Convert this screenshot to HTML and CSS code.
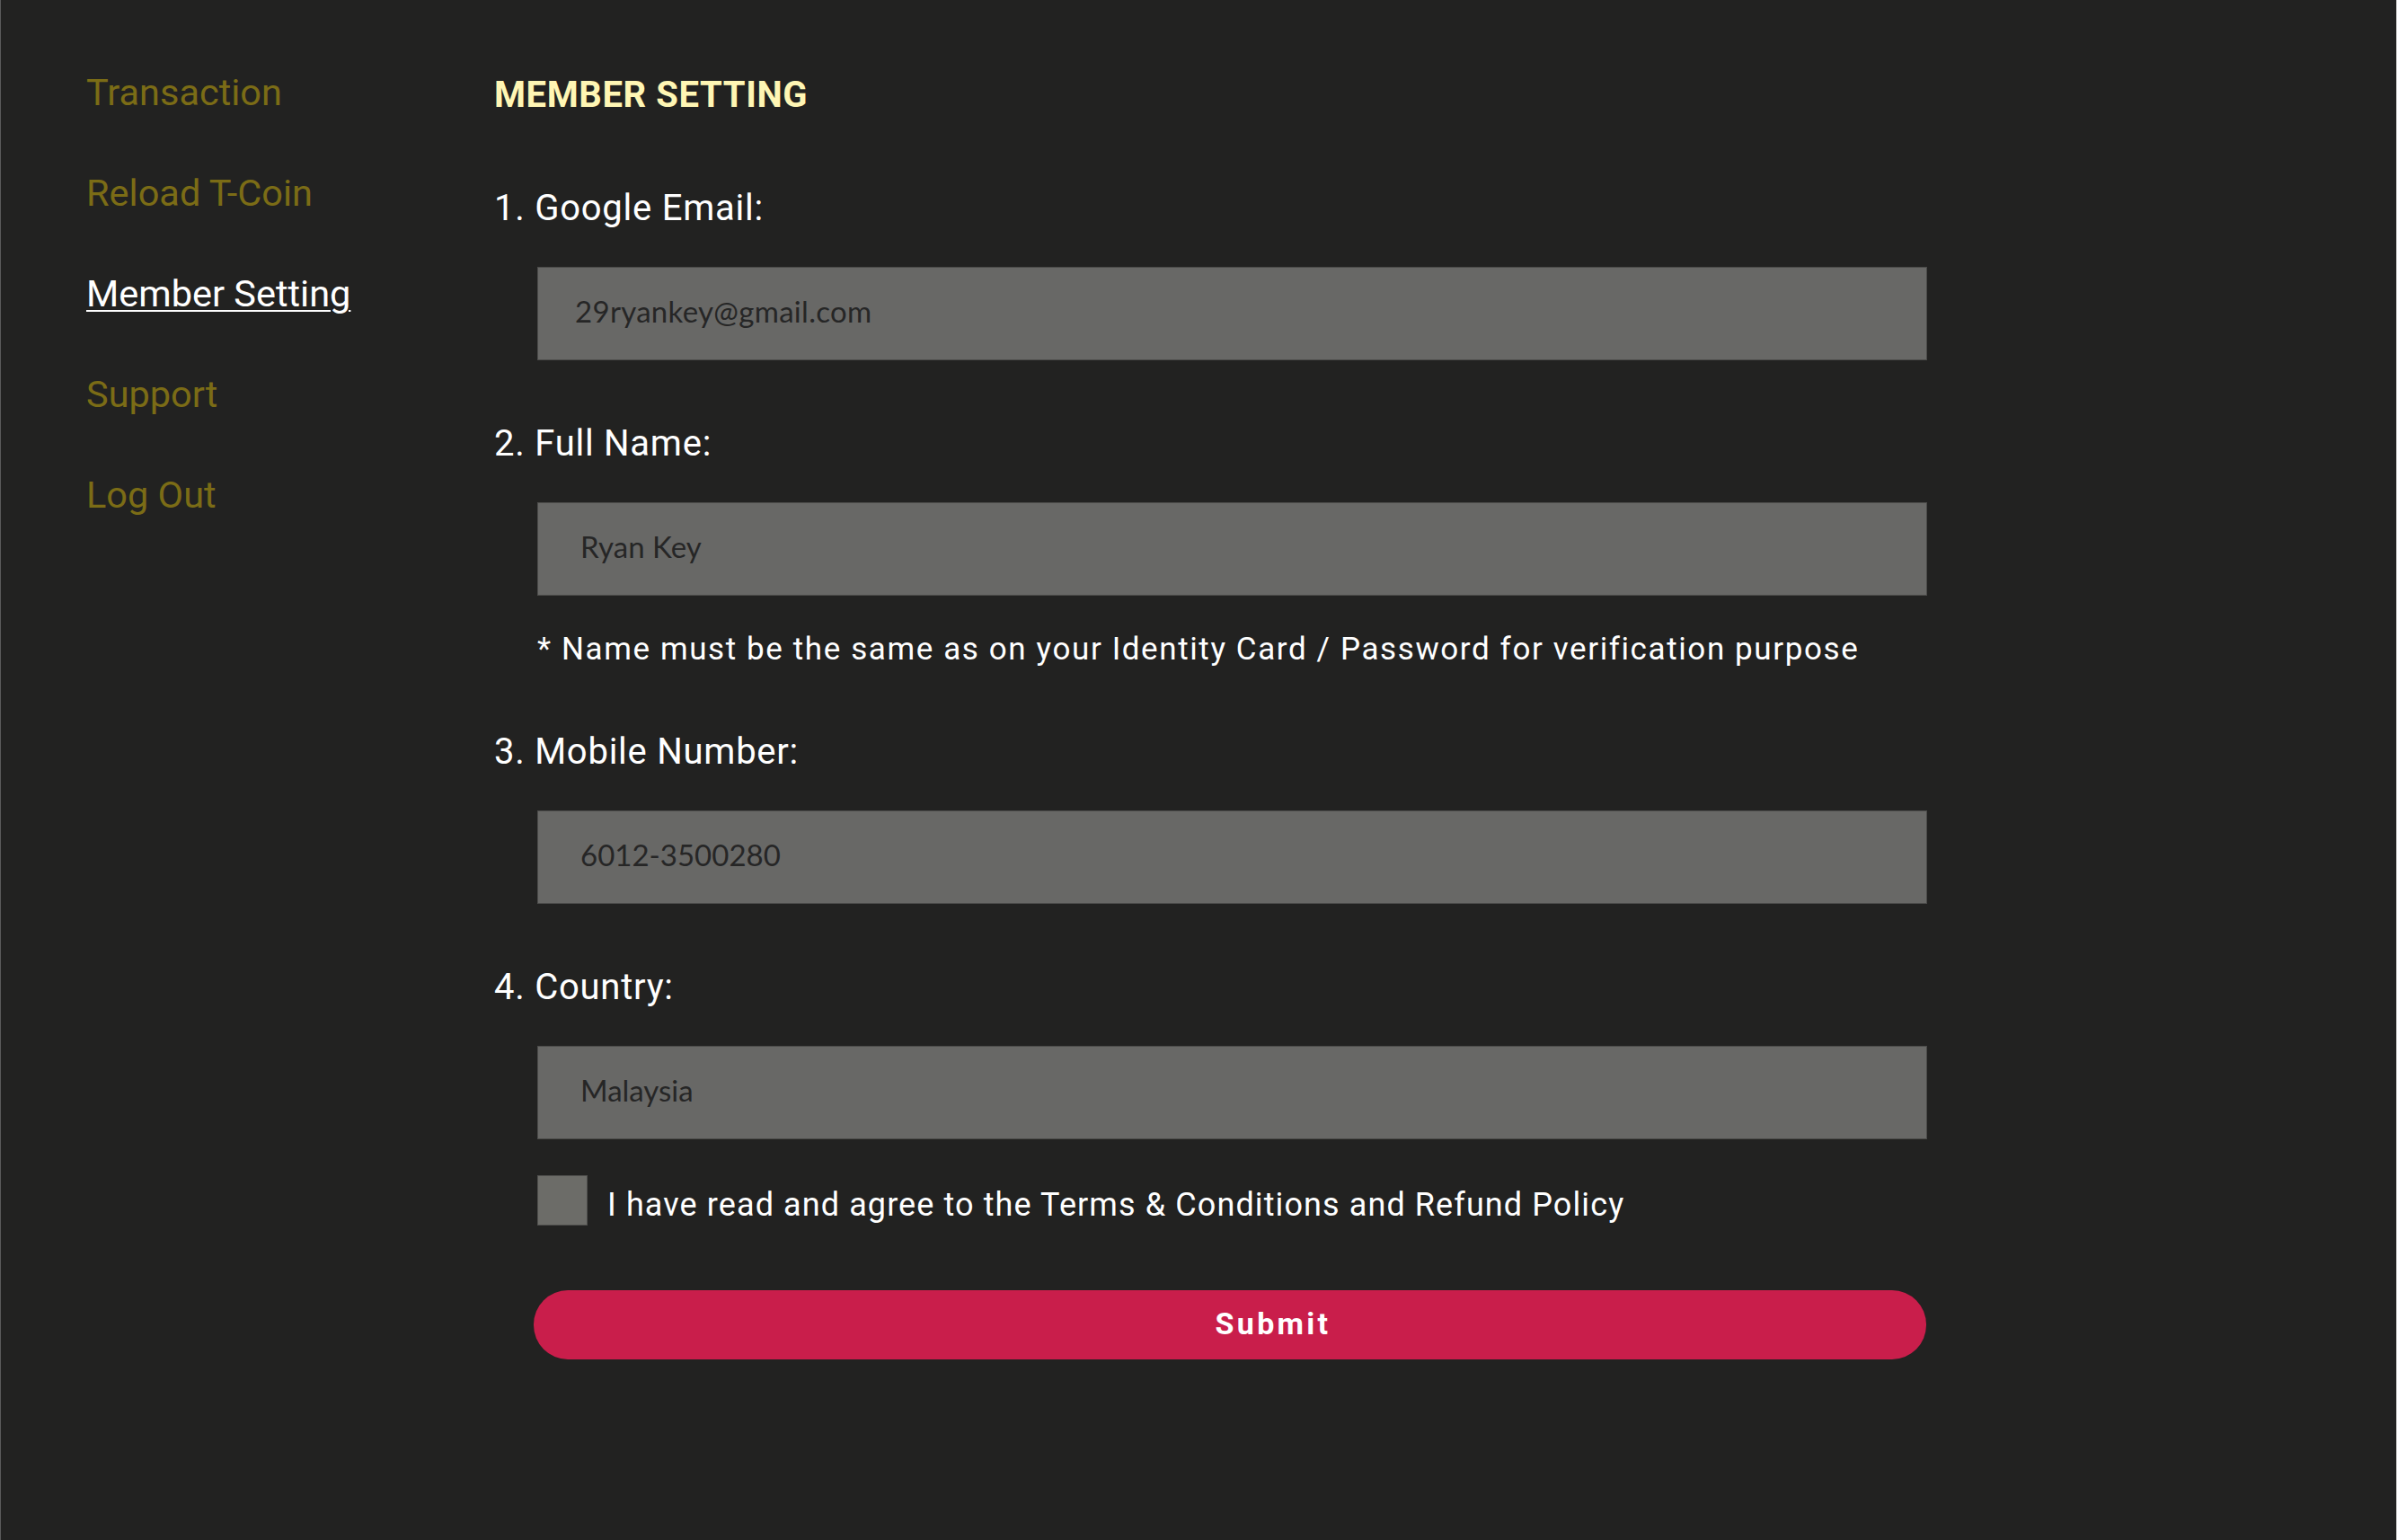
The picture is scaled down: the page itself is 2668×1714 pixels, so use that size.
FILE: index.html
```html
<!DOCTYPE html>
<html lang="en">
<head>
<meta charset="utf-8">
<title>Member Setting</title>
<link rel="stylesheet" href="styles.css">
</head>
<body>
<div class="page">
  <nav class="sidebar">
    <a class="nav-link" href="#">Transaction</a>
    <a class="nav-link" href="#">Reload T-Coin</a>
    <a class="nav-link active" href="#">Member Setting</a>
    <a class="nav-link" href="#">Support</a>
    <a class="nav-link" href="#">Log Out</a>
  </nav>
  <main class="content">
    <h1 class="title">MEMBER SETTING</h1>
    <form class="form">
      <label class="field-label">1. Google Email:</label>
      <input class="field-input email" type="text" value="29ryankey@gmail.com">

      <label class="field-label">2. Full Name:</label>
      <input class="field-input" type="text" value="Ryan Key">
      <p class="note">* Name must be the same as on your Identity Card / Password for verification purpose</p>

      <label class="field-label">3. Mobile Number:</label>
      <input class="field-input" type="text" value="6012-3500280">

      <label class="field-label">4. Country:</label>
      <input class="field-input" type="text" value="Malaysia">

      <label class="agree">
        <input class="checkbox" type="checkbox">
        <span class="agree-text">I have read and agree to the Terms &amp; Conditions and Refund Policy</span>
      </label>

      <button class="submit" type="button">Submit</button>
    </form>
  </main>
</div>
</body>
</html>
```

FILE: styles.css
```css
html, body {
  margin: 0;
  padding: 0;
  background: #222221;
}

.page {
  display: flex;
  box-sizing: border-box;
  width: 2668px;
  height: 1714px;
  background: #222221;
  border-left: 1px solid #5a5a5a;
  border-right: 1px solid #c4c4c4;
  font-family: Roboto, "Liberation Sans", sans-serif;
}

.sidebar {
  display: flex;
  flex-direction: column;
  gap: 63px;
  width: 455px;
  box-sizing: border-box;
  padding: 78px 0 0 95px;
}

.nav-link {
  font-size: 41.5px;
  line-height: 49px;
  color: #7b6c16;
  text-decoration: none;
  white-space: nowrap;
}

.nav-link.active {
  color: #ffffff;
  text-decoration: underline;
  text-decoration-thickness: 2px;
  text-underline-offset: 4px;
}

.content {
  flex: 1;
  box-sizing: border-box;
  padding: 82px 0 0 94px;
}

.title {
  margin: 0 0 78px 0;
  font-size: 40px;
  line-height: 48px;
  font-weight: 700;
  color: #fff6b4;
  letter-spacing: 0.6px;
}

.form {
  display: flex;
  flex-direction: column;
  align-items: flex-start;
}

.field-label {
  display: block;
  font-size: 40px;
  line-height: 48px;
  color: #ffffff;
  margin: 0 0 41px 0;
  letter-spacing: 0.75px;
}

.field-input {
  display: block;
  box-sizing: border-box;
  width: 1547px;
  height: 104px;
  margin: 0 0 69px 48px;
  padding: 0 0 6px 47px;
  background: #686866;
  border: 1px solid #4c4c4a;
  border-radius: 0;
  font-family: Lato, "Open Sans", sans-serif;
  font-size: 33px;
  color: #262626;
  outline: none;
}

.field-input.email {
  padding-left: 41px;
  letter-spacing: 0.3px;
}

.note {
  margin: -30px 0 69px 48px;
  font-size: 35px;
  line-height: 42px;
  color: #ffffff;
  letter-spacing: 1.6px;
  white-space: nowrap;
}

.agree {
  display: flex;
  align-items: center;
  margin: -29px 0 72px 48px;
}

.checkbox {
  appearance: none;
  -webkit-appearance: none;
  margin: 0;
  width: 56px;
  height: 56px;
  background: #6c6c68;
  border: 1px solid #4f4f4d;
  border-radius: 0;
}

.agree-text {
  margin: 10px 0 0 22px;
  font-size: 36px;
  line-height: 44px;
  color: #ffffff;
  letter-spacing: 1.1px;
  white-space: nowrap;
}

.submit {
  width: 1550px;
  height: 77px;
  margin: 0 0 0 44px;
  padding: 0 0 3px 96px;
  background: #c91e4b;
  border: none;
  border-radius: 38px;
  color: #ffffff;
  font-family: Roboto, "Liberation Sans", sans-serif;
  font-size: 34px;
  font-weight: 700;
  letter-spacing: 3.3px;
  cursor: pointer;
}
```
